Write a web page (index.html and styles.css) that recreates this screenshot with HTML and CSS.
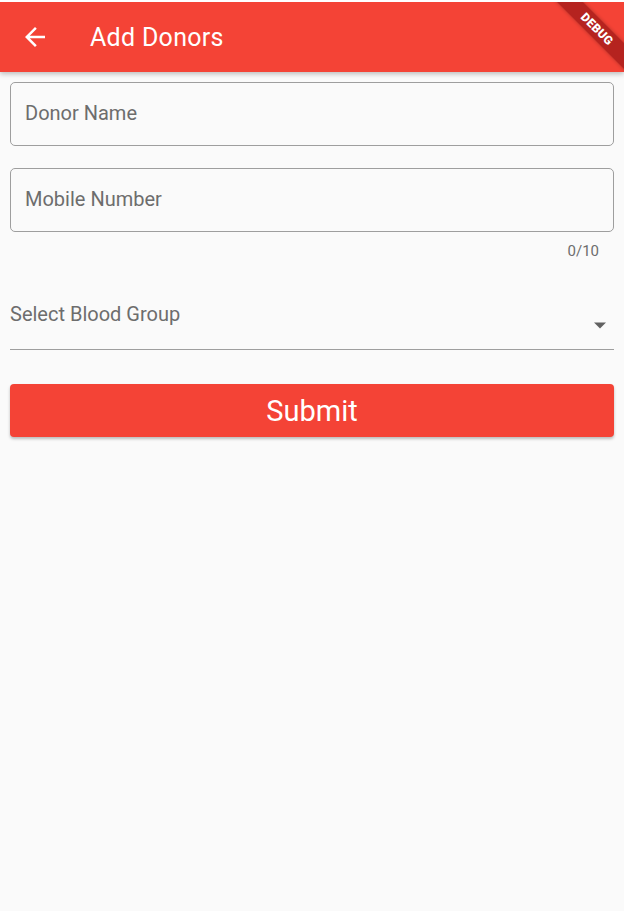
FILE: index.html
```html
<!DOCTYPE html>
<html>
<head>
<meta charset="utf-8">
<link rel="stylesheet" href="styles.css">
</head>
<body>
<div class="screen">
  <header class="appbar">
    <svg class="back" width="30" height="30" viewBox="0 0 24 24"><path d="M20 11H7.83l5.59-5.59L12 4l-8 8 8 8 1.41-1.41L7.83 13H20v-2z" fill="#fff"/></svg>
    <h1 class="title">Add Donors</h1>
    <div class="banner"><span>DEBUG</span></div>
  </header>
  <main class="form">
    <div class="field"><span class="hint">Donor Name</span></div>
    <div class="field field-second"><span class="hint">Mobile Number</span></div>
    <div class="counter">0/10</div>
    <div class="dropdown">
      <span class="dd-label">Select Blood Group</span>
      <svg class="dd-arrow" width="12" height="7" viewBox="0 0 12 7"><path d="M0 0.5h12L6 6.5z" fill="#616161"/></svg>
    </div>
    <button class="submit">Submit</button>
  </main>
</div>
</body>
</html>
```
FILE: styles.css
```css
html, body {
  margin: 0;
  padding: 0;
  background: #fafafa;
  font-family: Roboto, "Liberation Sans", sans-serif;
}
.screen {
  width: 624px;
  height: 911px;
  overflow: hidden;
  position: relative;
  background: #fafafa;
  border-top: 2px solid #ffffff;
}
.appbar {
  height: 70px;
  background: #f44336;
  display: flex;
  align-items: center;
  position: relative;
  overflow: hidden;
  box-shadow: 0 2px 5px rgba(0,0,0,0.25);
  z-index: 2;
}
.back {
  margin-left: 20px;
  margin-right: 40px;
}
.title {
  margin: 0;
  color: #fff;
  font-size: 25px;
  font-weight: 400;
  letter-spacing: 0.3px;
}
.banner {
  position: absolute;
  top: 18px;
  right: -38px;
  width: 130px;
  height: 18px;
  background: rgba(160, 24, 24, 0.75);
  transform: rotate(45deg);
  display: flex;
  align-items: center;
  justify-content: center;
  box-shadow: 0 0 4px rgba(0,0,0,0.3);
}
.banner span {
  color: #fff;
  font-size: 12px;
  font-weight: 900;
  letter-spacing: 0.3px;
}
.form {
  padding: 10px;
  display: flex;
  flex-direction: column;
}
.field {
  height: 62px;
  border: 1px solid #9e9e9e;
  border-radius: 5px;
  display: flex;
  align-items: center;
  padding-left: 14px;
}
.field-second {
  margin-top: 22px;
}
.hint {
  font-size: 20px;
  color: #6d6d6d;
  margin-top: -2px;
}
.counter {
  align-self: flex-end;
  margin-right: 15px;
  margin-top: 10px;
  font-size: 15px;
  color: #6d6d6d;
  line-height: 18px;
}
.dropdown {
  margin-top: 42px;
  height: 47px;
  border-bottom: 1px solid #9e9e9e;
  position: relative;
}
.dd-label {
  display: block;
  font-size: 20px;
  color: #6d6d6d;
  line-height: 24px;
}
.dd-arrow {
  position: absolute;
  right: 8px;
  top: 20px;
}
.submit {
  margin-top: 34px;
  height: 53px;
  border: none;
  border-radius: 4px;
  background: #f44336;
  color: #fff;
  font-family: Roboto, "Liberation Sans", sans-serif;
  font-size: 29px;
  box-shadow: 0 2px 3px rgba(0,0,0,0.25);
  padding: 0;
}
```
